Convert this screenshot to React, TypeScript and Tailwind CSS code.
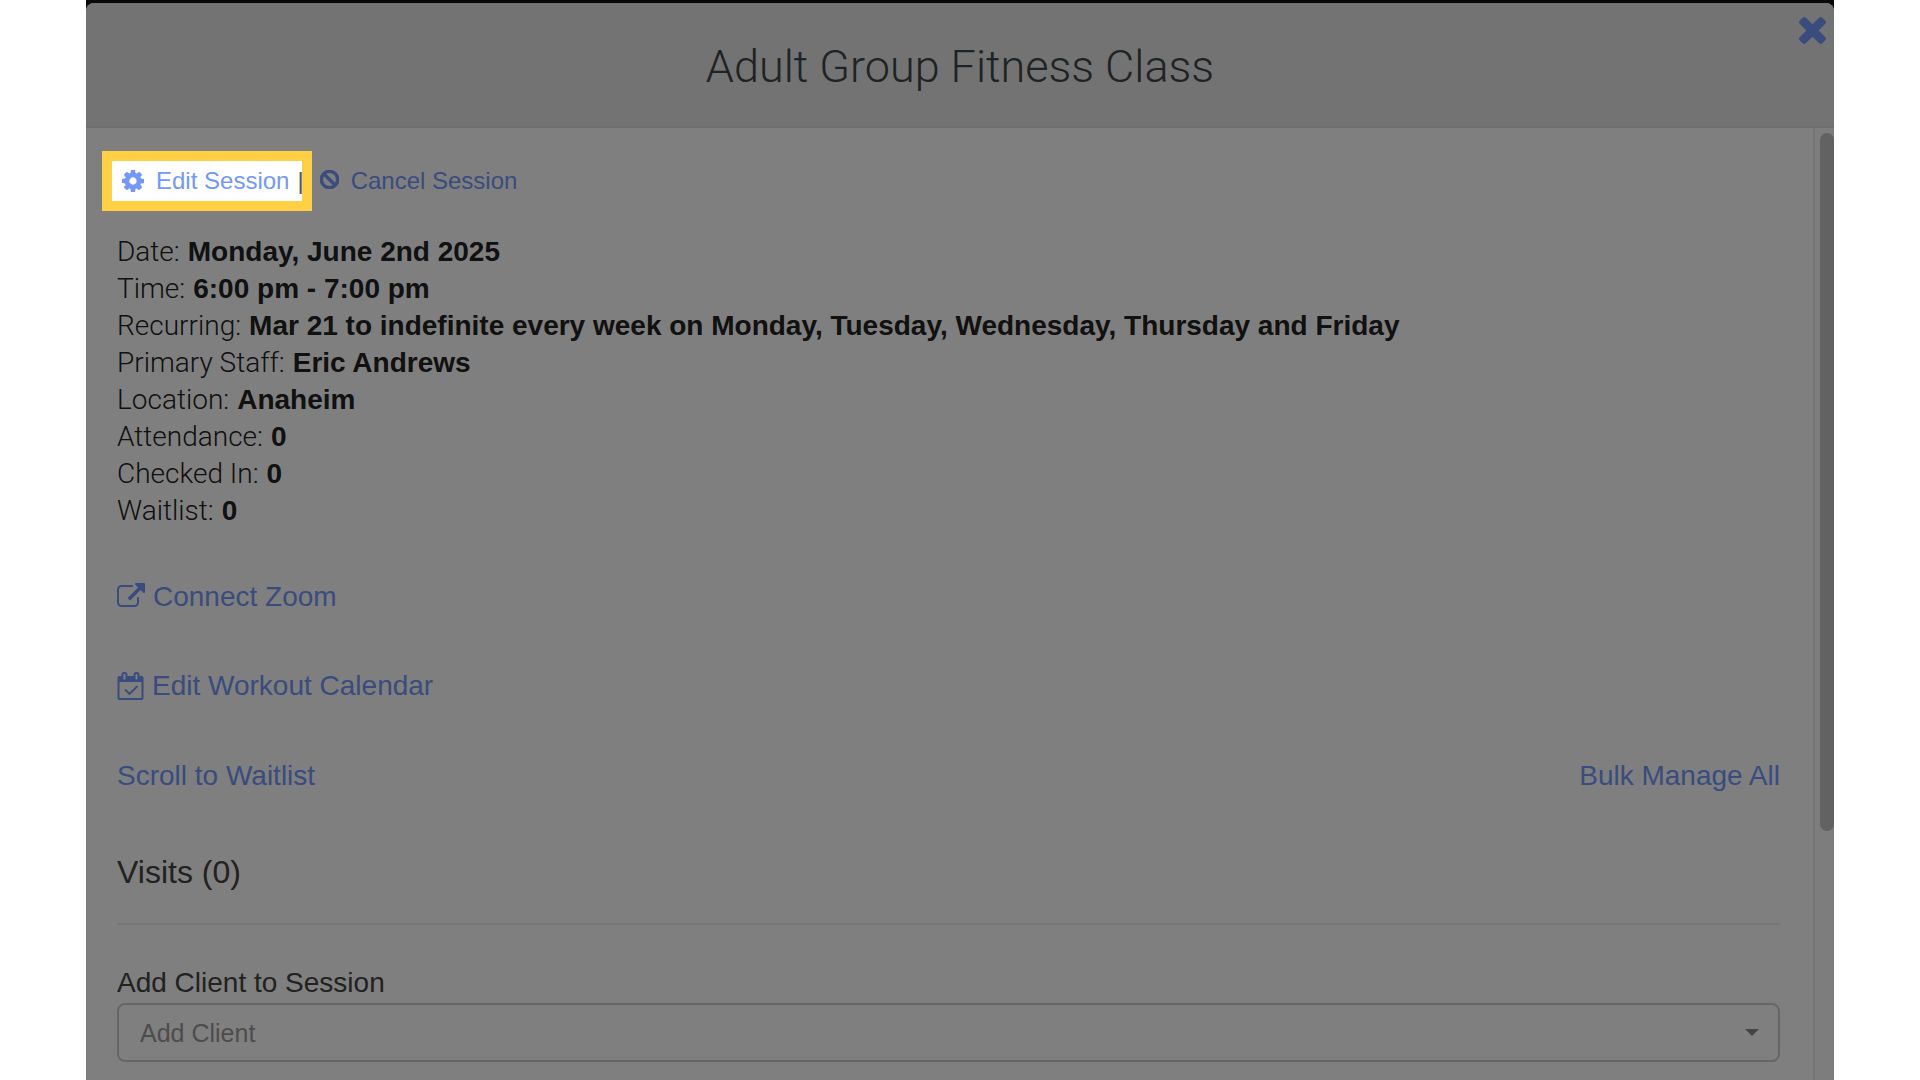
import type { ReactNode } from "react";

interface IconProps {
    path: string;
    viewBox?: string;
    className?: string;
}

const ICONS = {
    cog: "M1152 896q0-106-75-181t-181-75-181 75-75 181 75 181 181 75 181-75 75-181zm512-109v222q0 12-8 23t-20 13l-185 28q-19 54-39 91 35 50 107 138 10 12 10 25t-9 23q-27 37-99 108t-94 71q-12 0-26-9l-138-108q-44 23-91 38-16 136-29 186-7 28-36 28h-222q-14 0-24.5-8.5t-11.5-21.5l-28-184q-49-16-90-37l-141 107q-10 9-25 9-14 0-25-11-126-114-165-168-7-10-7-23 0-12 8-23 15-21 51-66.500t54-70.500q-27-50-41-99l-183-27q-13-2-21-12.500t-8-23.500v-222q0-12 8-23t19-13l186-28q14-46 39-92-40-57-107-138-10-12-10-24 0-10 9-23 26-36 98.500-107.500t94.500-71.500q13 0 26 10l138 107q44-23 91-38 16-136 29-186 7-28 36-28h222q14 0 24.500 8.500t11.500 21.500l28 184q49 16 90 37l142-107q9-9 24-9 13 0 25 10 129 119 165 170 7 8 7 22 0 12-8 23-15 21-51 66.500t-54 70.500q26 50 41 98l183 28q13 2 21 12.500t8 23.500z",
    ban: "M1440 893q0-161-87-295l-754 753q137 89 297 89 111 0 211.500-43.500t173.500-116.500 116-174.500 43-212.500zm-999 299l755-754q-135-91-300-91-148 0-273 73t-198 199-73 274q0 162 89 299zm1223-299q0 157-61 300t-163.500 246-245 164-298.500 61-298.500-61-245-164-163.500-246-61-300 61-299.500 163.500-245.500 245-164 298.500-61 298.500 61 245 164 163.500 245.500 61 299.500z",
    times: "M1490 1322q0 40-28 68l-136 136q-28 28-68 28t-68-28l-294-294-294 294q-28 28-68 28t-68-28l-136-136q-28-28-28-68t28-68l294-294-294-294q-28-28-28-68t28-68l136-136q28-28 68-28t68 28l294 294 294-294q28-28 68-28t68 28l136 136q28 28 28 68t-28 68l-294 294 294 294q28 28 28 68z",
    externalLink: "M1408 928v320q0 119-84.500 203.500t-203.500 84.500h-832q-119 0-203.500-84.500t-84.500-203.500v-832q0-119 84.500-203.500t203.500-84.500h704q14 0 23 9t9 23v64q0 14-9 23t-23 9h-704q-66 0-113 47t-47 113v832q0 66 47 113t113 47h832q66 0 113-47t47-113v-320q0-14 9-23t23-9h64q14 0 23 9t9 23zm384-864v512q0 26-19 45t-45 19-45-19l-176-176-652 652q-10 10-23 10t-23-10l-114-114q-10-10-10-23t10-23l652-652-176-176q-19-19-19-45t19-45 45-19h512q26 0 45 19t19 45z",
    calendarCheck: "M1303 964l-512 512q-10 9-23 9t-23-9l-288-288q-9-10-9-23t9-22l46-46q9-9 22-9t23 9l220 220 444-444q10-9 23-9t22 9l46 46q9 9 9 22t-9 23zm-1175 700h1408v-1024h-1408v1024zm384-1216v-288q0-14-9-23t-23-9h-64q-14 0-23 9t-9 23v288q0 14 9 23t23 9h64q14 0 23-9t9-23zm768 0v-288q0-14-9-23t-23-9h-64q-14 0-23 9t-9 23v288q0 14 9 23t23 9h64q14 0 23-9t9-23zm384-64v1280q0 52-38 90t-90 38h-1408q-52 0-90-38t-38-90v-1280q0-52 38-90t90-38h128v-96q0-66 47-113t113-47h64q66 0 113 47t47 113v96h384v-96q0-66 47-113t113-47h64q66 0 113 47t47 113v96h128q52 0 90 38t38 90z",
};

const details = [
    { label: "Date", value: "Monday, June 2nd 2025" },
    { label: "Time", value: "6:00 pm - 7:00 pm" },
    { label: "Recurring", value: "Mar 21 to indefinite every week on Monday, Tuesday, Wednesday, Thursday and Friday" },
    { label: "Primary Staff", value: "Eric Andrews" },
    { label: "Location", value: "Anaheim" },
    { label: "Attendance", value: "0" },
    { label: "Checked In", value: "0" },
    { label: "Waitlist", value: "0" },
];

function Icon({ path, viewBox = "0 0 1792 1792", className }: IconProps) {
    return (
        <svg viewBox={viewBox} fill="currentColor" aria-hidden="true" className={className}>
            <path d={path} />
        </svg>
    );
}

function ActionLink({ children, className = "" }: { children: ReactNode; className?: string }) {
    return (
        <a href="#" className={`flex items-center text-[#7398fa] hover:underline ${className}`}>
            {children}
        </a>
    );
}

export default function App() {
    return (
        <div className="h-screen overflow-hidden bg-white px-[86px] font-['Helvetica_Neue','Liberation_Sans',Arial,sans-serif]">
            {/* isolate + overflow-hidden keep the spotlight shade inside the window */}
            <div className="isolate flex h-full flex-col overflow-hidden bg-[#101010] pt-[3px]">
                <div role="dialog" aria-labelledby="session-title" className="flex min-h-0 flex-1 flex-col rounded-t-lg bg-white">
                    <header className="relative rounded-t-lg border-b-2 border-[#dedede] bg-[#e6e6e6] px-8 pt-9 pb-[31px]">
                        <h1 id="session-title" className="text-center font-['Roboto',sans-serif] text-[45px] leading-[56px] font-light text-[#3f474b]">
                            Adult Group Fitness Class
                        </h1>
                        <button type="button" aria-label="Close" className="absolute top-[14px] right-2 text-[#7398fa]">
                            <Icon path={ICONS.times} viewBox="302 366 1188 1188" className="size-[27px]" />
                        </button>
                    </header>

                    <div className="flex min-h-0 flex-1">
                        <main className="min-w-0 flex-1 pt-[35px] pr-[33px] pl-[31px] text-[28px] leading-9">
                            <div className="flex items-center text-2xl leading-9">
                                <div className="relative flex items-center pl-[5px]">
                                    <ActionLink className="gap-3">
                                        <Icon path={ICONS.cog} viewBox="128 128 1536 1536" className="size-[22px]" />
                                        Edit Session
                                    </ActionLink>
                                    <span className="ml-2 text-[#555]">|</span>
                                    <div className="pointer-events-none absolute -top-3 -left-[15px] z-10 h-[60px] w-[210px] border-[10px] border-[#ffd044] shadow-[0_0_0_9999px_rgba(0,0,0,0.5)]" />
                                </div>
                                <ActionLink className="ml-4 gap-3">
                                    <Icon path={ICONS.ban} viewBox="128 128 1536 1536" className="mb-1 size-[19px] -scale-x-100 stroke-current stroke-[60]" />
                                    Cancel Session
                                </ActionLink>
                            </div>

                            <dl className="mt-[34px] leading-[37px] text-[#222]">
                                {details.map(({ label, value }) => (
                                    <div key={label} className="flex gap-2">
                                        <dt className="font-['Roboto',sans-serif] font-light">{label}:</dt>
                                        <dd className="font-bold">{value}</dd>
                                    </div>
                                ))}
                            </dl>

                            <div className="mt-[50px] flex">
                                <ActionLink className="gap-2">
                                    <Icon path={ICONS.externalLink} viewBox="0 0 1792 1536" className="mb-1 h-6 w-7" />
                                    Connect Zoom
                                </ActionLink>
                            </div>
                            <div className="mt-[53px] flex">
                                <ActionLink className="gap-2">
                                    <Icon path={ICONS.calendarCheck} viewBox="0 0 1664 1792" className="h-7 w-[27px]" />
                                    Edit Workout Calendar
                                </ActionLink>
                            </div>
                            <div className="mt-[54px] flex justify-between">
                                <ActionLink>Scroll to Waitlist</ActionLink>
                                <ActionLink>Bulk Manage All</ActionLink>
                            </div>

                            <h2 className="mt-[58px] text-[32px] leading-10 text-[#444]">Visits (0)</h2>
                            <hr className="mt-[31px] border-t-2 border-[#eee]" />

                            <label htmlFor="client" className="mt-10 block text-[#444]">
                                Add Client to Session
                            </label>
                            <div className="relative mt-[2px]">
                                <select
                                    id="client"
                                    defaultValue=""
                                    className="block h-[59px] w-full appearance-none rounded-lg border-2 border-[#ccc] bg-white px-[21px] text-[25px] text-[#999]"
                                >
                                    <option value="">Add Client</option>
                                </select>
                                <svg viewBox="0 0 14 7" className="pointer-events-none absolute top-[26px] right-[21px] h-[7px] w-[14px] fill-[#888]">
                                    <path d="M0 0h14L7 7z" />
                                </svg>
                            </div>
                        </main>

                        {/* Scrollbar */}
                        <div className="flex w-[21px] shrink-0 flex-col items-end border-l-2 border-[#ededed] bg-[#fafafa] pt-[5px]">
                            <div className="h-[698px] w-[14px] rounded-full bg-[#c4c4c4]" />
                        </div>
                    </div>
                </div>
            </div>
        </div>
    );
}
